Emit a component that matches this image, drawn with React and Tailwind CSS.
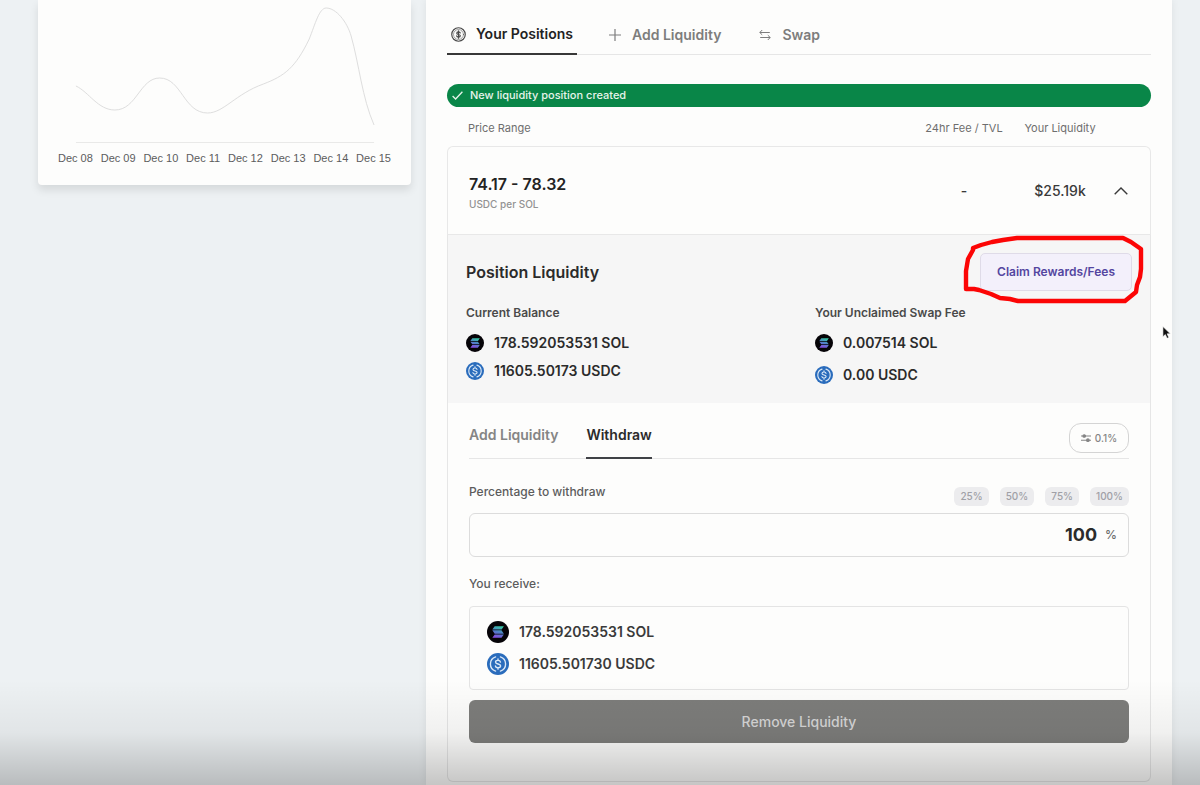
import React, { useState } from "react";

const DATES = ["Dec 08", "Dec 09", "Dec 10", "Dec 11", "Dec 12", "Dec 13", "Dec 14", "Dec 15"];

function SolIcon({ className }) {
  return (
    <svg viewBox="0 0 24 24" className={className} aria-hidden="true">
      <defs>
        <linearGradient id="sol" x1="15" y1="5" x2="10" y2="19" gradientUnits="userSpaceOnUse">
          <stop offset="0" stopColor="#35d0a0" />
          <stop offset="0.5" stopColor="#4f80c8" />
          <stop offset="1" stopColor="#8a48e0" />
        </linearGradient>
      </defs>
      <circle cx="12" cy="12" r="12" fill="#060408" />
      <path
        fill="url(#sol)"
        d="M8.400 5.800h10l-2.400 3.600H5.800zM5.800 10.200h10l2.600 3.600H8.400zM8.400 14.600h10l-2.600 3.600H5.800z"
      />
    </svg>
  );
}

function UsdcIcon({ className }) {
  return (
    <svg viewBox="0 0 24 24" className={className} fill="none" aria-hidden="true">
      <circle cx="12" cy="12" r="12" fill="#2a6cbc" />
      <g stroke="#dbe8f6" strokeWidth="1.5" strokeLinecap="round">
        <path d="M9.4 4.2a8.2 8.2 0 0 0 0 15.6M14.6 4.2a8.2 8.2 0 0 1 0 15.6" />
        <path d="M14.7 9.9c-.2-1.2-1.2-1.9-2.7-1.9s-2.7.7-2.7 1.9c0 1.4 1.2 1.8 2.7 2.1s2.8.7 2.8 2.1c0 1.2-1.2 1.9-2.8 1.9s-2.7-.7-2.8-2M12 6.4V8M12 16v1.6" />
      </g>
    </svg>
  );
}

function DollarIcon() {
  return (
    <svg viewBox="0 0 24 24" className="size-[15px]" fill="none" stroke="#484848" strokeWidth="1.9" strokeLinecap="round" aria-hidden="true">
      <circle cx="12" cy="12" r="10.800" />
      <circle cx="12" cy="12" r="8" strokeWidth=".8" />
      <path d="M14.8 9.6c-.3-1.1-1.3-1.7-2.8-1.7s-2.8.7-2.8 2c0 2.9 5.7 1.3 5.7 4.2 0 1.3-1.3 2-2.9 2s-2.8-.7-3-1.8M12 6.2v11.6" />
    </svg>
  );
}

function PlusIcon() {
  return (
    <svg viewBox="0 0 12 12" className="size-3" stroke="currentColor" strokeWidth="1.2" aria-hidden="true">
      <path d="M6 0v12M0 6h12" />
    </svg>
  );
}

function SwapIcon() {
  return (
    <svg viewBox="0 0 12 12" className="size-3" fill="none" stroke="currentColor" strokeWidth="1" aria-hidden="true">
      <path d="M3.200 1 .8 3.500l2.400 2.300M.8 3.500h10M8.800 6.200 11.200 8.500l-2.400 2.500M11.200 8.500h-10" />
    </svg>
  );
}

function SlidersIcon() {
  return (
    <svg viewBox="0 0 10 10" className="size-[10px]" stroke="currentColor" strokeWidth="1.1" fill="currentColor" aria-hidden="true">
      <path d="M0 3h10M0 7.200h10" />
      <circle cx="3.200" cy="3" r="1.300" />
      <circle cx="6.900" cy="7.200" r="1.300" />
    </svg>
  );
}

function Token({ icon: Icon, size = "size-[18px]", children }) {
  return (
    <li className="flex items-center gap-[10px] text-sm font-semibold leading-[22px]">
      <Icon className={size + " shrink-0"} />
      {children}
    </li>
  );
}

function ChartCard() {
  return (
    <section aria-label="Price history" className="rounded-b-[4px] bg-[#fdfdfc] px-5 pb-[17px] shadow-[0_5px_8px_rgba(0,0,0,0.1)]">
      <svg viewBox="0 0 334 149" preserveAspectRatio="none" className="block h-[149px] w-full" fill="none" stroke="#dedede" aria-hidden="true">
        <path
          vectorEffect="non-scaling-stroke"
          d="M18 86C31 92 40 110 57 110C79 110 82 78 102 78C124 78 126 113 150 113C166 113 178 94 206 84C227 76 238 68 252 39C258 24 262 8 269 8C279 8 290 22 294 36C302 64 305 98 317 125"
        />
        <path vectorEffect="non-scaling-stroke" stroke="#e9e9e8" d="M18 142.500H317" />
      </svg>
      <ul className="flex justify-between whitespace-nowrap font-['Liberation_Sans',Arial,sans-serif] text-[11px] leading-[19px] text-[#5c5c5c]">
        {DATES.map((d) => (
          <li key={d}>{d}</li>
        ))}
      </ul>
    </section>
  );
}

function MainTabs() {
  return (
    <nav className="mt-[15px] flex h-10 gap-8 border-b border-[#e6e6e6] text-sm font-semibold text-[#7d7d7d]">
      <button type="button" className="-mb-px flex items-center gap-[10px] border-b-2 border-[#383838] px-1 text-[#232323]">
        <DollarIcon />
        Your Positions
      </button>
      <button type="button" className="flex items-center gap-[11px]">
        <PlusIcon />
        Add Liquidity
      </button>
      <button type="button" className="ml-[6px] flex items-center gap-[11px]">
        <SwapIcon />
        Swap
      </button>
    </nav>
  );
}

function ClaimButton() {
  return (
    <div className="relative">
      <button type="button" className="h-[38px] rounded-[5px] border border-[#dfdbe8] bg-[#f3f0fb] px-4 text-xs font-semibold text-[#5446a0]">
        Claim Rewards/Fees
      </button>
      <svg viewBox="0 0 184 72" className="pointer-events-none absolute -left-[18px] -top-[18px] h-[72px] w-[184px] max-w-none" fill="none" stroke="#fc0505" strokeWidth="4.4" strokeLinejoin="round" aria-hidden="true">
        <path d="M4 54V36L6 24L11 15V13L19 10L30 7L41 5L55 3H161L169 7L179 14V34L178 42L175 50L174 57L163 66H56L48 64L38 63L29 59L17 55L12 54Z" />
      </svg>
    </div>
  );
}

function PositionLiquidity() {
  return (
    <div className="bg-[#f6f6f6] px-[18px] pb-[17px] pt-[18px]">
      <div className="flex items-center justify-between">
        <h2 className="text-base font-semibold">Position Liquidity</h2>
        <ClaimButton />
      </div>
      <div className="mt-[13px] grid grid-cols-2 gap-x-8">
        <div>
          <h3 className="text-xs font-semibold leading-[18px] text-[#4a4a4a]">Current Balance</h3>
          <ul className="mt-[10px] grid gap-[6px]">
            <Token icon={SolIcon}>178.592053531 SOL</Token>
            <Token icon={UsdcIcon}>11605.50173 USDC</Token>
          </ul>
        </div>
        <div>
          <h3 className="text-xs font-semibold leading-[18px] text-[#4a4a4a]">Your Unclaimed Swap Fee</h3>
          <ul className="mt-[10px] grid gap-[10px]">
            <Token icon={SolIcon}>0.007514 SOL</Token>
            <Token icon={UsdcIcon}>0.00 USDC</Token>
          </ul>
        </div>
      </div>
    </div>
  );
}

function WithdrawForm() {
  const [amount, setAmount] = useState("100");
  return (
    <form className="px-[21px] pb-[38px]" onSubmit={(e) => e.preventDefault()}>
      <div className="flex h-14 items-stretch gap-7 border-b border-[#e6e6e6] text-sm font-semibold">
        <button type="button" className="pt-2 text-[#858585]">Add Liquidity</button>
        <button type="button" className="-mb-px border-b-2 border-[#404246] pt-[10px]">Withdraw</button>
        <button type="button" aria-label="Slippage 0.1%" className="mb-[5px] ml-auto flex h-[30px] w-[60px] items-center justify-center gap-1 self-end rounded-xl border border-[#d4d4d4] text-[10px] font-medium text-[#858585]">
          <SlidersIcon />
          0.1%
        </button>
      </div>
      <div className="mt-[22px] flex items-start justify-between">
        <label htmlFor="amount" className="text-xs font-medium leading-[22px] text-[#5c5c5c]">Percentage to withdraw</label>
        <div className="flex gap-[11px] pt-[6px]">
          {["25", "50", "75", "100"].map((p) => (
            <button key={p} type="button" onClick={() => setAmount(p)} className="h-[19px] rounded-md bg-[#ececee] px-[6px] text-[10px] font-medium text-[#a0a0a6]">
              {p}%
            </button>
          ))}
        </div>
      </div>
      <div className="mt-[7px] flex h-11 items-center gap-2 rounded-md border border-[#dcdcdc] px-[11px]">
        <input id="amount" value={amount} onChange={(e) => setAmount(e.target.value)} className="min-w-0 flex-1 bg-transparent text-right text-lg font-bold outline-none" />
        <span className="text-xs font-medium text-[#6b6b6b]">%</span>
      </div>
      <p className="mt-4 text-xs font-medium leading-[22px] text-[#5c5c5c]">You receive:</p>
      <ul className="mt-[11px] grid gap-[10px] rounded-[4px] border border-[#e4e4e4] px-[17px] py-[14px] text-[#3a3a3a]">
        <Token icon={SolIcon} size="size-[22px]">178.592053531 SOL</Token>
        <Token icon={UsdcIcon} size="size-[22px]">11605.501730 USDC</Token>
      </ul>
      <button type="submit" className="mt-[10px] h-[43px] w-full rounded-md bg-[#7d7d7b] text-sm font-medium text-[#d6d6d6]">
        Remove Liquidity
      </button>
    </form>
  );
}

function Positions() {
  return (
    <table className="w-full table-fixed border-separate border-spacing-0">
      <colgroup>
        <col />
        <col className="w-[106px]" />
        <col className="w-[86px]" />
        <col className="w-[48px]" />
      </colgroup>
      <thead className="text-[11px] text-[#6e6e6e]">
        <tr className="h-[39px]">
          <th scope="col" className="pl-[21px] pt-1 text-left font-normal">Price Range</th>
          <th scope="col" className="pt-1 font-normal">24hr Fee / TVL</th>
          <th scope="col" className="pt-1 font-normal">Your Liquidity</th>
          <td />
        </tr>
      </thead>
      <tbody>
        <tr className="h-[89px] text-center text-sm font-medium text-[#3a3a3a]">
          <td className="rounded-tl-md border-b border-l border-t border-[#e8e8e8] pl-[21px] pt-1 text-left">
            <div className="text-base font-semibold leading-[22px] text-[#232323]">74.17 - 78.32</div>
            <div className="text-[10px] leading-[18px] text-[#929292]">USDC per SOL</div>
          </td>
          <td className="border-b border-t border-[#e8e8e8]">-</td>
          <td className="border-b border-t border-[#e8e8e8]">$25.19k</td>
          <td className="rounded-tr-md border-b border-r border-t border-[#e8e8e8] pr-3">
            <button type="button" aria-label="Collapse position" className="block w-full py-2">
              <svg viewBox="0 0 14 8" className="mx-auto h-2 w-[14px]" fill="none" stroke="currentColor" strokeWidth="1.4" aria-hidden="true">
                <path d="M.7 7.300 7 1l6.300 6.300" />
              </svg>
            </button>
          </td>
        </tr>
        <tr>
          <td colSpan={4} className="rounded-b-md border-x border-b border-[#e6e6e6] p-0">
            <PositionLiquidity />
            <WithdrawForm />
          </td>
        </tr>
      </tbody>
    </table>
  );
}

export default function App() {
  return (
    <div className="relative grid min-h-screen grid-cols-[minmax(0,1fr)_minmax(0,2fr)] gap-[15px] bg-[#edf1f3] pl-[38px] pr-7 font-['Inter',sans-serif] text-[#2b2b2b]">
      <aside>
        <ChartCard />
      </aside>
      <main className="relative bg-[#fdfdfc] px-[21px] shadow-[0_0_8px_rgba(0,0,0,0.07)]">
        <MainTabs />
        <p role="status" className="mt-[29px] flex h-[23px] items-center gap-[7px] rounded-full bg-[#098648] pl-[5px] text-[11px] font-medium text-[#e6f3ea]">
          <svg viewBox="0 0 11 9" className="h-[9px] w-[11px]" fill="none" stroke="currentColor" strokeWidth="1.3" aria-hidden="true">
            <path d="m.6 5 3 3L10.400.8" />
          </svg>
          New liquidity position created
        </p>
        <Positions />
        <svg viewBox="0 0 10 15" className="pointer-events-none absolute right-[1px] top-[325px] h-[15px] w-[9px]" aria-hidden="true">
          <path d="M1 .8v11.400l2.700-2.400 1.900 4.200 2-.9-1.900-4.100h3.600z" fill="#111" stroke="#fff" strokeWidth=".7" />
        </svg>
      </main>
      <div className="pointer-events-none absolute inset-x-0 bottom-0 h-[105px] bg-linear-to-b from-black/0 via-black/5 to-black/22" />
    </div>
  );
}
